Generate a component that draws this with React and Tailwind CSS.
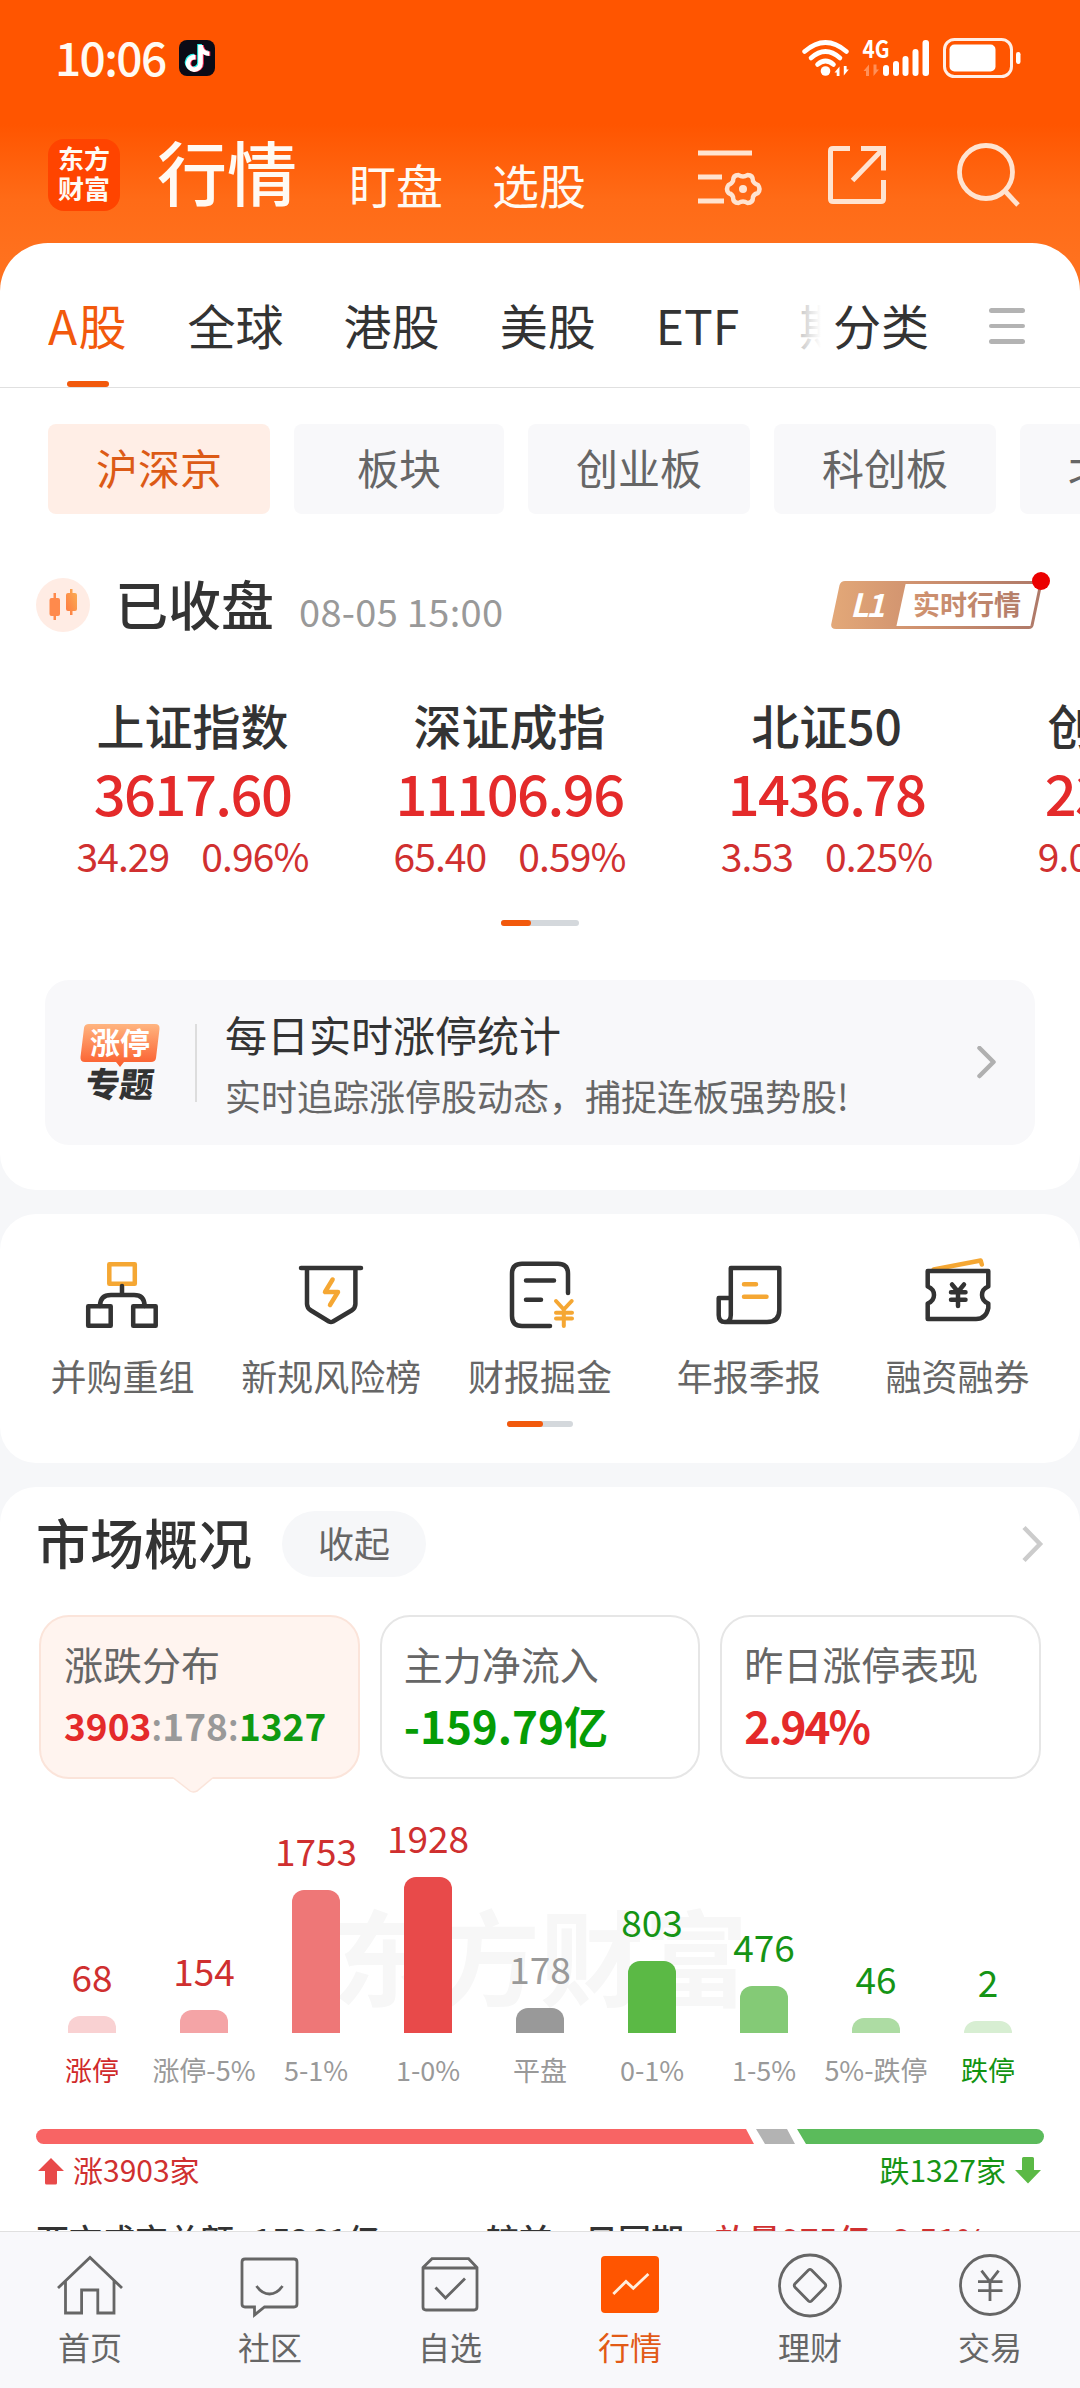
import React from "react";
import { FaTiktok } from "react-icons/fa";

const tabs = ["A股", "全球", "港股", "美股", "ETF", "期货"];

const chips = ["沪深京", "板块", "创业板", "科创板", "北交所"];

const indices = [
  { name: "上证指数", value: "3617.60", diff: "34.29", rate: "0.96%" },
  { name: "深证成指", value: "11106.96", diff: "65.40", rate: "0.59%" },
  { name: "北证50", value: "1436.78", diff: "3.53", rate: "0.25%" },
  { name: "创业板指", value: "2343.38", diff: "9.06", rate: "0.39%" },
];

const bars = [
  { label: "涨停", value: 68, height: 17, bar: "bg-[#f9d1d2]", text: "text-[#cf2f2f]", tag: "text-[#d02a2a]" },
  { label: "涨停-5%", value: 154, height: 23, bar: "bg-[#f4a4a6]", text: "text-[#cf2f2f]", tag: "text-[#999999]" },
  { label: "5-1%", value: 1753, height: 143, bar: "bg-[#ee7777]", text: "text-[#cf2f2f]", tag: "text-[#999999]" },
  { label: "1-0%", value: 1928, height: 156, bar: "bg-[#e84a4a]", text: "text-[#cf2f2f]", tag: "text-[#999999]" },
  { label: "平盘", value: 178, height: 25, bar: "bg-[#999999]", text: "text-[#999999]", tag: "text-[#999999]" },
  { label: "0-1%", value: 803, height: 72, bar: "bg-[#5bb945]", text: "text-[#159415]", tag: "text-[#999999]" },
  { label: "1-5%", value: 476, height: 47, bar: "bg-[#84ca76]", text: "text-[#159415]", tag: "text-[#999999]" },
  { label: "5%-跌停", value: 46, height: 15, bar: "bg-[#addca3]", text: "text-[#159415]", tag: "text-[#999999]" },
  { label: "跌停", value: 2, height: 12, bar: "bg-[#d7eed2]", text: "text-[#159415]", tag: "text-[#109310]" },
];

function StatusBar() {
  return (
    <div className="flex h-[116px] items-center justify-between pl-[55px] pr-[59px]">
      <div className="flex items-center">
        <span className="text-[46px] leading-none font-medium tracking-[-1.600px] -mt-[5px]">10:06</span>
        <div className="relative ml-[13px] h-9 w-9 rounded-lg bg-[#0b0b16]">
          <FaTiktok className="absolute left-[5px] top-[4px] h-[27px] w-[25px] text-[#25f4ee]" />
          <FaTiktok className="absolute left-[7px] top-[5px] h-[27px] w-[25px] text-[#fe2c55]" />
          <FaTiktok className="absolute left-[6px] top-[4.5px] h-[27px] w-[25px] text-white" />
        </div>
      </div>
      <svg width="219" height="40" viewBox="0 0 219 40" fill="none">
        <g stroke="#fff" strokeWidth="4.6" strokeLinecap="round">
          <path d="M2.600 13.500Q23.500 -4.500 44.400 13.500" />
          <path d="M9 20Q23.500 7 38 20" />
          <path d="M15.500 26.500Q23.500 19.500 31.500 26.500" />
        </g>
        <circle cx="23.500" cy="33" r="4.800" fill="#fff" />
        <path d="M32.500 34.500l5-6v9.500h-2.800v-3.500zM46.800 31.500l-5 6v-9.500h2.800v3.500z" fill="#fff" />
        <path d="M61.500 33l5.500-6.500v11.500h-3v-5zM77 31.500l-5.500 6.500V26.500h3v5z" fill="#fff" opacity=".35" />
        <text x="60.500" y="20" fill="#fff" fontSize="24" fontWeight="700" textLength="27" lengthAdjust="spacingAndGlyphs">4G</text>
        <g fill="#fff">
          <rect x="81" y="27" width="6" height="11" rx="3" />
          <rect x="91" y="23" width="6" height="15" rx="3" />
          <rect x="100.500" y="18" width="6" height="20" rx="3" />
          <rect x="110.500" y="11" width="6" height="27" rx="3" />
          <rect x="120.500" y="2" width="6.500" height="36" rx="3" />
        </g>
        <rect x="142.500" y="1.500" width="67" height="37" rx="10" stroke="#fff" strokeOpacity=".9" strokeWidth="3" />
        <rect x="147.500" y="6.500" width="46" height="27" rx="5" fill="#fff" />
        <rect x="214" y="14" width="4.500" height="12" rx="2.200" fill="#fff" />
      </svg>
    </div>
  );
}

function Header() {
  return (
    <header className="h-[291px] shrink-0 bg-[linear-gradient(to_bottom,#ff5500_0px,#ff5500_124px,#ff6b17_200px,#ff711e_260px)] text-[#fffaf3]">
      <StatusBar />
      <div className="flex h-[118px] items-center pl-12 pr-[59px]">
        <div className="flex h-[72px] w-[72px] flex-col items-center justify-center rounded-2xl bg-[#ff4400] text-[26px] font-bold leading-[30px] -mt-[1px]">
          <span className="-mt-[3px]">东方</span>
          <span>财富</span>
        </div>
        <span className="ml-[37px] -mt-[8px] text-[70px] leading-none font-medium">行情</span>
        <span className="ml-[52px] mt-[16px] text-[47px] leading-none">盯盘</span>
        <span className="ml-[49px] mt-[16px] text-[47px] leading-none">选股</span>
        <div className="ml-auto flex items-center text-[#ffe3d0]">
          <svg width="64" height="64" viewBox="0 0 64 64" fill="none" stroke="currentColor" strokeWidth="5">
            <path d="M0 10H54M0 34H24M0 58H26" />
            <path
              strokeWidth="4.500"
              strokeLinejoin="round"
              d="M40.500 32Q45 35 49.500 32Q55 32 55 38Q56 40.500 60 42Q63 46 60 50Q56 51 55 54Q55 60 49.500 60Q45 57 40.500 60Q35 60 35 54Q34 51 30.500 50Q27.500 46 30.500 42Q34 40.500 35 38Q35 32 40.500 32Z"
            />
            <circle cx="45" cy="46" r="4" fill="currentColor" stroke="none" />
          </svg>
          <svg className="ml-[66px]" width="58" height="58" viewBox="0 0 58 58" fill="none" stroke="currentColor" strokeWidth="5">
            <path d="M22 2.500H5Q2.500 2.500 2.500 5V53Q2.500 55.500 5 55.500H53Q55.500 55.500 55.500 53V34" />
            <path d="M33 2.500H55.500V24.500M55 3L24.500 34.500" />
          </svg>
          <svg className="ml-[71px]" width="64" height="66" viewBox="0 0 64 66" fill="none" stroke="currentColor" strokeWidth="4.800">
            <circle cx="29" cy="30" r="26.500" />
            <path d="M48 49L61 63" />
          </svg>
        </div>
      </div>
    </header>
  );
}

function Tabs() {
  return (
    <nav className="flex h-[145px] border-b border-[#e0e0e0] pl-12 text-[48px] leading-none text-[#333333]">
      <div className="relative flex w-[773px] gap-[60px] overflow-hidden">
        {tabs.map((tab, i) => (
          <div key={tab} className={i === 0 ? "relative shrink-0 pt-[57px] tracking-[1.200px] text-[#f2590c]" : "shrink-0 pt-[57px]"}>
            {tab}
            {i === 0 && <div className="absolute bottom-0 left-1/2 h-[6px] w-[42px] -translate-x-1/2 rounded-full bg-[#f2590c]" />}
          </div>
        ))}
        <div className="absolute right-0 top-0 h-full w-10 bg-gradient-to-r from-white/50 to-white" />
      </div>
      <div className="ml-3 pt-[57px]">分类</div>
      <div className="ml-[60px] mt-[65px] flex flex-col gap-[11px]">
        <div className="h-[4.500px] w-9 rounded-full bg-[#b3b3b3]" />
        <div className="h-[4.500px] w-9 rounded-full bg-[#b3b3b3]" />
        <div className="h-[4.500px] w-9 rounded-full bg-[#b3b3b3]" />
      </div>
    </nav>
  );
}

function LevelBadge() {
  return (
    <svg className="overflow-visible" width="213" height="48" viewBox="0 0 213 48" fill="none">
      <defs>
        <linearGradient id="level" x1="0" y1="0" x2="213" y2="0" gradientUnits="userSpaceOnUse">
          <stop stopColor="#e3a878" />
          <stop offset=".4" stopColor="#d0926f" />
          <stop offset="1" stopColor="#ad7868" />
        </linearGradient>
      </defs>
      <path d="M14 1.500H210L201 44.500Q200.500 46.500 198 46.500H5Q1 46.500 1.800 43L10 4.500Q11 1.500 14 1.500Z" stroke="url(#level)" strokeWidth="3" />
      <path d="M14 1H75L65 47H5Q1 47 1.800 43L10 4.500Q11 1 14 1Z" fill="url(#level)" />
      <text x="19" y="36" fill="#fff" fontSize="32" fontWeight="700" fontStyle="italic" textLength="35">L1</text>
      <text x="82" y="34" fill="url(#level)" fontSize="27" fontWeight="700">实时行情</text>
      <circle cx="210" cy="0" r="9" fill="#eb0000" />
    </svg>
  );
}

function MarketStatus() {
  return (
    <div className="mt-16 flex h-[54px] items-center pl-9 pr-9">
      <svg width="54" height="54" viewBox="0 0 54 54">
        <defs>
          <linearGradient id="candle" x1="0" y1="1" x2="1" y2="0">
            <stop stopColor="#ff7840" />
            <stop offset="1" stopColor="#f9b055" />
          </linearGradient>
        </defs>
        <circle cx="27" cy="27" r="27" fill="#ffece4" />
        <path d="M17.500 15h2.500v5h2q2 0 2 2V36q0 2-2 2h-2v4h-2.500v-4h-2q-2 0-2-2V22q0-2 2-2h2z" fill="#ff8a4c" />
        <path d="M34 11h2.500v4h2.500q2 0 2 2V31q0 2-2 2h-2.500v4H34v-4h-2q-2 0-2-2V17q0-2 2-2h2z" fill="url(#candle)" />
      </svg>
      <span className="ml-[25px] -mt-[4px] text-[53px] leading-none font-medium text-[#333333]">已收盘</span>
      <span className="ml-[25px] mt-[11px] text-[38px] leading-none tracking-[0.300px] text-[#999999]">08-05 15:00</span>
      <div className="ml-auto">
        <LevelBadge />
      </div>
    </div>
  );
}

function Indices() {
  return (
    <div className="mt-[68px] flex pl-[34px] leading-none">
      {indices.map((item) => (
        <div key={item.name} className="flex w-[317px] shrink-0 flex-col items-center">
          <div className="text-[48px] leading-none font-medium text-[#333333]">{item.name}</div>
          <div className="mt-4 text-[56px] leading-none font-medium tracking-[-1.500px] text-[#e42a2a]">{item.value}</div>
          <div className="mt-4 flex gap-[32px] text-[39px] leading-none tracking-[-0.900px] text-[#d03030]">
            <span>{item.diff}</span>
            <span>{item.rate}</span>
          </div>
        </div>
      ))}
    </div>
  );
}

function TopicCard() {
  return (
    <div className="mx-[45px] mt-[54px] flex h-[165px] items-center rounded-[24px] bg-[#f8f8fa]">
      <div className="ml-[35px] flex w-[80px] flex-col items-center">
        <svg width="80" height="44" viewBox="0 0 80 44">
          <defs>
            <linearGradient id="topic" x1="0" y1="0" x2="0" y2="1">
              <stop stopColor="#ffb580" />
              <stop offset="1" stopColor="#fb5b2b" />
            </linearGradient>
          </defs>
          <path d="M9 0H75Q80 0 79.500 5L76 34Q75.500 38 71 38H44L40 43L36 38H5Q0 38 .5 33L4 4Q4.500 0 9 0Z" fill="url(#topic)" />
          <text x="10" y="30" fill="#fff" fontSize="30" fontWeight="700">涨停</text>
        </svg>
        <div className="-mt-[3px] -skew-x-6 text-[34px] font-black leading-[36px] text-[#333333]">专题</div>
      </div>
      <div className="ml-[35px] h-[78px] w-[2px] bg-[#dddddd]" />
      <div className="ml-[28px]">
        <div className="text-[42px] leading-none text-[#333333]">每日实时涨停统计</div>
        <div className="mt-[22px] text-[36px] leading-none text-[#666666]">实时追踪涨停股动态，捕捉连板强势股!</div>
      </div>
      <svg className="ml-auto mr-[38px]" width="20" height="34" viewBox="0 0 20 34" fill="none" stroke="#b0b0b0" strokeWidth="4.500" strokeLinecap="round" strokeLinejoin="round">
        <path d="M2.500 2L16.500 16L2.500 30" />
      </svg>
    </div>
  );
}

const tools = [
  {
    label: "并购重组",
    icon: (
      <>
        <rect x="27.300" y="9.200" width="25.500" height="19.600" stroke="#f5a733" />
        <path d="M40 31V40M18 51Q18 40 29 40H52Q62.600 40 62.600 51" />
        <rect x="6.200" y="51.200" width="22.500" height="19.600" />
        <rect x="51.200" y="51.200" width="22.500" height="19.600" />
      </>
    ),
  },
  {
    label: "新规风险榜",
    icon: (
      <>
        <path d="M10 13H70M16 13V49Q16 53 20 55.500L38 66.500Q40 67.500 42 66.500L60.500 55.500Q64.400 53 64.400 49V13" />
        <path d="M41.600 24.500L34 37H47L39 50" stroke="#f5a733" />
      </>
    ),
  },
  {
    label: "财报掘金",
    icon: (
      <>
        <path d="M50 71H22Q12 71 12 61V18.700Q12 8.700 22 8.700H58Q68 8.700 68 18.700V38M26 25.500H54M26 44.700H41" />
        <path d="M56 46L63.800 54.500L71.700 46M56 57.700H72M56 63.500H72M63.800 54.500V71" stroke="#f5a733" strokeWidth="4" />
      </>
    ),
  },
  {
    label: "年报季报",
    icon: (
      <>
        <path d="M21.800 60V13H70.300V55Q70.300 67 58 67H16M21.800 43H9.700V60Q9.700 67 16 67Q21.800 67 21.800 60" />
        <path d="M35 29.300H47M35 41.700H57.500" stroke="#f5a733" />
      </>
    ),
  },
  {
    label: "融资融券",
    icon: (
      <>
        <path d="M15.600 14.500L62.700 5.500L63.800 9.500" stroke="#f5a733" />
        <path d="M9.700 16H70.300V31.500Q64 34 64 40Q64 46 70.300 48.500V53Q68 64 58 64H9.700V48.500Q16 46 16 40Q16 34 9.700 31.500Z" />
        <path d="M34 29.500L40 36.700L46 29.500M33 37.300H47.500M33 44.700H47.500M40 37V51" />
      </>
    ),
  },
];

function Tools() {
  return (
    <section className="mt-6 h-[249px] shrink-0 rounded-[36px] bg-white pt-[41px]">
      <div className="grid grid-cols-5 pl-[18px] pr-[18px]">
        {tools.map((tool) => (
          <div key={tool.label} className="flex flex-col items-center">
            <svg width="80" height="80" viewBox="0 0 80 80" fill="none" stroke="#333333" strokeWidth="4.500" strokeLinecap="round" strokeLinejoin="round">
              {tool.icon}
            </svg>
            <div className="mt-[22px] whitespace-nowrap text-[36px] leading-none text-[#666666]">{tool.label}</div>
          </div>
        ))}
      </div>
      <div className="mx-auto mt-7 h-[6px] w-[66px] rounded-full bg-[#d4d8dc]">
        <div className="h-full w-9 rounded-full bg-[#f2590c]" />
      </div>
    </section>
  );
}

function StatCards() {
  return (
    <div className="mt-[38px] grid grid-cols-3 gap-5 px-[39px] text-[39px] leading-none text-[#666666]">
      <div className="relative h-[164px] rounded-[30px] border-2 border-[#fbe4da] bg-[#fff4ef] pl-[23px] pt-[27px]">
        <div>涨跌分布</div>
        <div className="mt-[20px] flex h-11 items-center text-[37px] font-bold">
          <span className="text-[#e42a2a]">3903</span>
          <span className="font-medium text-[#999999]">:</span>
          <span className="text-[#999999]">178</span>
          <span className="font-medium text-[#999999]">:</span>
          <span className="text-[#109a10]">1327</span>
        </div>
        <svg className="absolute left-[132px] top-[160px]" width="42" height="16" viewBox="0 0 42 16" fill="#fff4ef">
          <path d="M0 0L17 14Q20 16 24 14L40 0Z" />
          <path d="M1 1.500L17 14Q20 16 24 14L39 1.500" fill="none" stroke="#fbe4da" strokeWidth="1.500" />
        </svg>
      </div>
      <div className="h-[164px] rounded-[30px] border-2 border-[#e6e6e6] pl-[22px] pt-[27px]">
        <div>主力净流入</div>
        <div className="mt-[20px] text-[44px] leading-none font-bold text-[#059c05]">-159.79亿</div>
      </div>
      <div className="h-[164px] rounded-[30px] border-2 border-[#e6e6e6] pl-[22px] pt-[27px]">
        <div>昨日涨停表现</div>
        <div className="mt-[20px] text-[44px] leading-none font-bold tracking-[-2px] text-[#e42a2a]">2.94%</div>
      </div>
    </div>
  );
}

function Distribution() {
  return (
    <div className="relative px-9">
      <div className="absolute left-[332px] top-[123px] text-[104px] font-bold leading-none text-[#f7f7f7]">东方财富</div>
      <div className="relative grid h-[254px] grid-cols-9">
        {bars.map((item) => (
          <div key={item.label} className="flex flex-col items-center justify-end">
            <div className={"mb-[21px] text-[37px] leading-none " + item.text}>{item.value}</div>
            <div className={"w-12 rounded-t-xl " + item.bar} style={{ height: item.height }} />
          </div>
        ))}
      </div>
      <div className="mt-[23px] grid grid-cols-9 text-[27px] leading-none">
        {bars.map((item) => (
          <div key={item.label} className={"whitespace-nowrap text-center " + item.tag}>
            {item.label}
          </div>
        ))}
      </div>
      <div className="mt-[46px] flex h-[15px] gap-[2px] overflow-hidden rounded-full">
        <div className="w-[718px] bg-[#f86464] [clip-path:polygon(0_0,710px_0,718px_100%,0_100%)]" />
        <div className="w-[39px] bg-[#b3b3b3] [clip-path:polygon(0_0,31px_0,39px_100%,9px_100%)]" />
        <div className="flex-1 bg-[#5bbb5b] [clip-path:polygon(0_0,100%_0,100%_100%,9px_100%)]" />
      </div>
      <div className="mt-[8px] flex items-center justify-between text-[30px] leading-none">
        <div className="flex items-center text-[#d03030]">
          <svg className="ml-[2px] mr-2 mt-[6px]" width="27" height="27" viewBox="0 0 27 27" fill="#e84a4a">
            <path d="M13 0L26 13H19V25Q19 26.500 17.500 26.500H8.500Q7 26.500 7 25V13H0Z" />
          </svg>
          涨3903家
        </div>
        <div className="flex items-center text-[#159415]">
          跌1327家
          <svg className="ml-[9px] mr-[2px] mt-[4px]" width="27" height="27" viewBox="0 0 27 27" fill="#5bb945">
            <path d="M13 26.500L26 13H19V1.500Q19 0 17.500 0H8.500Q7 0 7 1.500V13H0Z" />
          </svg>
        </div>
      </div>
      <div className="mt-[38px] flex whitespace-nowrap text-[33px] leading-none font-medium text-[#333333]">
        <span className="w-[217px]">两市成交总额</span>
        <span className="w-[233px]">15261亿</span>
        <span className="w-[229px]">较前一日同期</span>
        <span className="w-[175px] text-[#d03030]">放量975亿</span>
        <span className="text-[#d03030]">6.51%</span>
      </div>
    </div>
  );
}

function Overview() {
  return (
    <section className="mt-6 shrink-0 rounded-t-[36px] bg-white pt-6">
      <div className="flex h-[66px] items-center pl-9 pr-9">
        <h2 className="-mt-[5px] text-[54px] leading-none font-medium text-[#333333]">市场概况</h2>
        <div className="ml-[30px] flex h-[66px] w-36 items-center justify-center rounded-full bg-[#f6f7f9] pb-1 text-[36px] leading-none text-[#666666]">
          收起
        </div>
        <svg className="ml-auto" width="22" height="38" viewBox="0 0 22 38" fill="none" stroke="#cccccc" strokeWidth="4.500">
          <path d="M2 2.500L18 19L2 35.500" />
        </svg>
      </div>
      <StatCards />
      <Distribution />
    </section>
  );
}

const navItems = [
  {
    label: "首页",
    icon: <path d="M4 36L36 5.500L68 36M11.500 29V61H27.600V38H43.800V61H60V29" />,
  },
  {
    label: "社区",
    icon: <path d="M11 7H60Q63 7 63 10V52Q63 55 60 55H30.500L20.500 63V55H11Q8 55 8 52V10Q8 7 11 7ZM22.500 34Q28 42 35.500 42Q43 42 48.500 34" />,
  },
  {
    label: "自选",
    icon: <path d="M9 15.500L18 6.700H54.600L63 15.500V55Q63 58 60 58H12Q9 58 9 55ZM9 16H63M21.500 35.500L31.500 46L51 26.500" />,
  },
  {
    label: "行情",
    active: true,
    icon: (
      <>
        <rect x="7" y="4" width="58" height="57" rx="4" fill="#ff5500" stroke="none" />
        <path d="M19.300 42L32 29.500L39.300 36.300L54.400 22" stroke="#ffeedd" />
      </>
    ),
  },
  {
    label: "理财",
    icon: (
      <>
        <circle cx="36" cy="33.500" r="30.500" />
        <path d="M34.500 18Q36 16.700 37.500 18L51 31.800Q52.500 33.500 51 35.200L37.500 49Q36 50.300 34.500 49L21 35.200Q19.500 33.500 21 31.800Z" />
      </>
    ),
  },
  {
    label: "交易",
    icon: (
      <>
        <circle cx="36" cy="33" r="29.500" />
        <path d="M27.500 18.700L36 29.700L44.600 18.700M24 29.700H48.500M24 38.700H48.500M36 29.700V49" />
      </>
    ),
  },
];

function BottomNav() {
  return (
    <nav className="grid h-[157px] shrink-0 grid-cols-6 border-t border-[#e0e0e0] bg-[#f8f8fb]">
      {navItems.map((item) => (
        <div key={item.label} className="flex flex-col items-center pt-5">
          <svg width="72" height="66" viewBox="0 0 72 66" fill="none" stroke="#666666" strokeWidth="2.800">
            {item.icon}
          </svg>
          <div className={item.active ? "mt-3 text-[32px] leading-none text-[#e25a16]" : "mt-3 text-[32px] leading-none text-[#666666]"}>
            {item.label}
          </div>
        </div>
      ))}
    </nav>
  );
}

export default function App() {
  return (
    <div className="flex h-[2388px] w-[1080px] flex-col overflow-hidden bg-[#f6f7f9] font-['Noto_Sans_CJK_SC',sans-serif]">
      <main className="flex min-h-0 flex-1 flex-col overflow-hidden">
        <Header />
        <section className="-mt-12 h-[947px] shrink-0 overflow-hidden rounded-b-[36px] rounded-t-[48px] bg-white">
          <Tabs />
          <div className="mt-9 flex gap-6 pl-12 text-[42px] leading-none text-[#666666]">
            {chips.map((chip, i) => (
              <div
                key={chip}
                className={
                  i === 0
                    ? "flex h-[90px] shrink-0 items-center rounded-lg bg-[#ffeee6] px-12 pb-1 text-[#dc5a16]"
                    : "flex h-[90px] min-w-[210px] shrink-0 items-center justify-center rounded-lg bg-[#f8f8fa] px-12 pb-1"
                }
              >
                {chip}
              </div>
            ))}
          </div>
          <MarketStatus />
          <Indices />
          <div className="mx-auto mt-[45px] h-[6px] w-[78px] rounded-full bg-[#d4d8dc]">
            <div className="h-full w-[30px] rounded-full bg-[#f2590c]" />
          </div>
          <TopicCard />
        </section>
        <Tools />
        <Overview />
      </main>
      <BottomNav />
    </div>
  );
}
